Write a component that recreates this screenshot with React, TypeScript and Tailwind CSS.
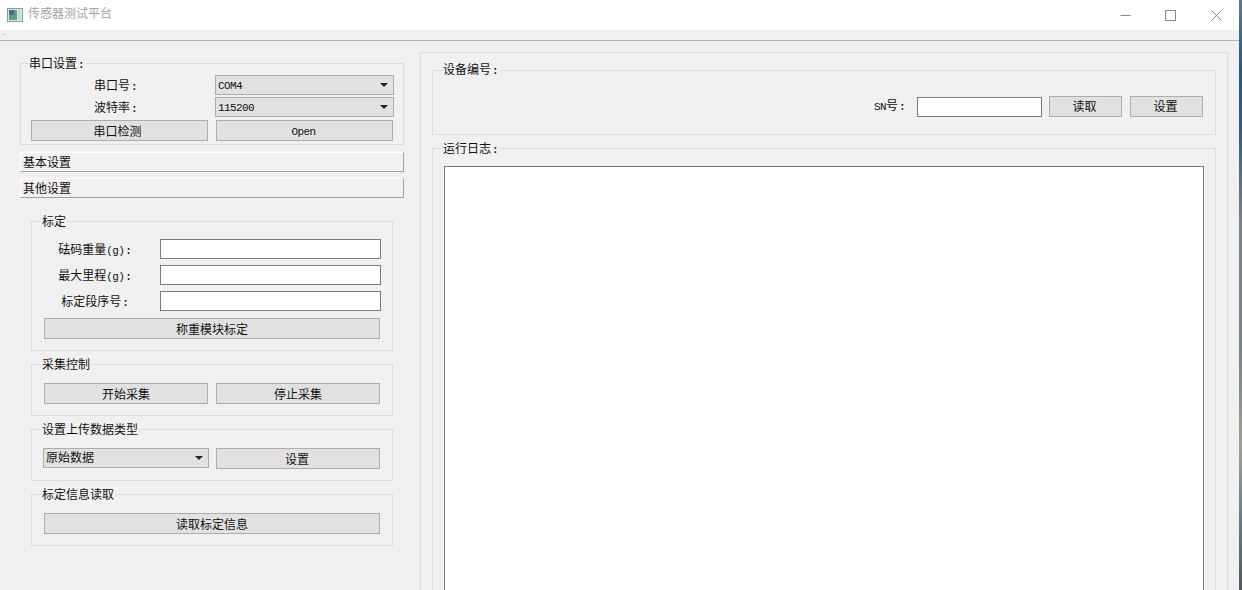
import React from "react";

const FONT = { fontFamily: '"Liberation Mono", "Noto Sans CJK SC", monospace' };

function L({ children }: { children: React.ReactNode }) {
  return <span className="text-[11px] tracking-[-0.6px]">{children}</span>;
}

function Colon() {
  return <span className="ml-[1px] text-[11px] font-bold">:</span>;
}

function Btn({ children, className = "", pad = "pr-[2px]", top = "pt-[4px]" }: { children: React.ReactNode; className?: string; pad?: string; top?: string }) {
  return (
    <div className={`flex items-center justify-center border border-[#adadad] bg-[#e1e1e1] text-[12px] leading-none text-[#111] ${top} ${pad} ${className}`}>
      {children}
    </div>
  );
}

function Combo({ children, className = "" }: { children: React.ReactNode; className?: string }) {
  return (
    <div className={`flex items-center justify-between border border-[#adadad] bg-[#e1e1e1] pl-[2px] pr-[4px] text-[12px] leading-none text-[#111] ${className}`}>
      <span className="pt-[2px]">{children}</span>
      <svg width="8" height="4" viewBox="0 0 8 4" className="mr-[1px]">
        <path d="M0 0H8L4 4Z" fill="#222" />
      </svg>
    </div>
  );
}

function Field({ className = "" }: { className?: string }) {
  return <div className={`border border-[#7a7a7a] bg-white ${className}`} />;
}

function Group({ title, className = "", legendClass = "left-[9px] top-[-7px]", children }: { title: React.ReactNode; className?: string; legendClass?: string; children?: React.ReactNode }) {
  return (
    <div className={`relative border border-[#dcdcdc] ${className}`}>
      <span className={`absolute bg-[#f0f0f0] px-[1px] text-[12px] leading-[16px] whitespace-nowrap text-[#111] ${legendClass}`}>
        {title}
      </span>
      {children}
    </div>
  );
}

function Bar({ title, className = "" }: { title: string; className?: string }) {
  return (
    <div className={`flex h-[20px] w-[384px] items-center border-t border-l border-t-white border-l-white border-r border-b border-r-[#a0a0a0] border-b-[#a0a0a0] pl-[2px] pt-[3px] text-[12px] leading-none text-[#111] ${className}`}>
      {title}
    </div>
  );
}

function FormRow({ label, className = "" }: { label: React.ReactNode; className?: string }) {
  return (
    <div className={`flex h-[20px] items-center ${className}`}>
      <span className="ml-[26px] w-[74px] pt-[3px] text-center text-[12px] leading-none whitespace-nowrap text-[#111]">{label}</span>
      <Field className="ml-[28px] h-[20px] w-[221px]" />
    </div>
  );
}

export default function App() {
  return (
    <div className="flex h-[590px] w-[1242px] overflow-hidden bg-[#f0f0f0]" style={FONT}>
      <div className="flex w-[1239px] flex-col">
        {/* title bar */}
        <div className="flex h-[30px] items-center bg-white">
          <svg width="16" height="14" viewBox="0 0 16 14" className="ml-[7px]">
            <rect x="0.5" y="0.5" width="15" height="13" fill="#e4e8e8" stroke="#8d989c" />
            <rect x="2" y="2" width="8" height="10" fill="#5f9a94" />
            <rect x="2" y="2" width="5" height="5" fill="#456f84" />
            <rect x="11" y="2" width="3" height="10" fill="#cdd4d6" />
          </svg>
          <span className="ml-[5px] text-[12px] leading-none text-[#a2a2a2]">传感器测试平台</span>
          <div className="ml-auto flex items-center">
            <svg width="11" height="11" viewBox="0 0 11 11" className="mr-[34px]">
              <path d="M0.5 5.5H10.5" stroke="#8a8a8a" />
            </svg>
            <svg width="11" height="11" viewBox="0 0 11 11" className="mr-[35px]">
              <rect x="0.5" y="0.5" width="10" height="10" fill="none" stroke="#8a8a8a" />
            </svg>
            <svg width="11" height="11" viewBox="0 0 11 11" className="mr-[17px]">
              <path d="M0.5 0.5L10.5 10.5M10.5 0.5L0.5 10.5" stroke="#8a8a8a" />
            </svg>
          </div>
        </div>
        {/* menu band */}
        <div className="h-[11px] border-b border-[#b4b4b4] bg-[#f0f0f0] pl-[3px] pt-[4px]">
          <div className="h-[1px] w-[1px] bg-[#888]" />
        </div>

        <div className="flex min-h-0 flex-1">
          {/* left column */}
          <div className="ml-[20px] w-[384px] shrink-0 pt-[22px]">
            <Group title={<>串口设置<Colon /></>} legendClass="left-[7px] top-[-7px]" className="h-[82px]">
              <div className="mt-[11px] flex h-[20px] items-center">
                <span className="ml-[73px] w-[121px] pt-[3px] text-[12px] leading-none text-[#111]">串口号<Colon /></span>
                <Combo className="h-[20px] w-[179px]"><L>COM4</L></Combo>
              </div>
              <div className="mt-[2px] flex h-[20px] items-center">
                <span className="ml-[73px] w-[121px] pt-[3px] text-[12px] leading-none text-[#111]">波特率<Colon /></span>
                <Combo className="h-[20px] w-[179px]"><L>115200</L></Combo>
              </div>
              <div className="mt-[3px] ml-[10px] flex gap-[8px]">
                <Btn pad="pr-[4px]" className="h-[21px] w-[177px]">串口检测</Btn>
                <Btn className="h-[21px] w-[177px]"><L>Open</L></Btn>
              </div>
            </Group>
            <Bar title="基本设置" className="mt-[7px]" />
            <Bar title="其他设置" className="mt-[6px]" />

            <div className="ml-[11px] w-[362px] pt-[23px]">
              <Group title="标定" className="h-[130px]">
                <FormRow label={<>砝码重量<L>(g)</L><Colon /></>} className="mt-[17px]" />
                <FormRow label={<>最大里程<L>(g)</L><Colon /></>} className="mt-[6px]" />
                <FormRow label={<>标定段序号<Colon /></>} className="mt-[6px]" />
                <Btn pad="pr-0" className="mt-[7px] ml-[12px] h-[21px] w-[336px]">称重模块标定</Btn>
              </Group>
              <Group title="采集控制" className="mt-[13px] h-[52px]">
                <div className="mt-[18px] ml-[12px] flex gap-[8px]">
                  <Btn pad="pr-0" className="h-[21px] w-[164px]">开始采集</Btn>
                  <Btn pad="pr-0" className="h-[21px] w-[164px]">停止采集</Btn>
                </div>
              </Group>
              <Group title="设置上传数据类型" className="mt-[13px] h-[52px]">
                <div className="mt-[18px] ml-[11px] flex gap-[7px]">
                  <Combo className="h-[20px] w-[166px]">原始数据</Combo>
                  <Btn className="h-[21px] w-[164px]">设置</Btn>
                </div>
              </Group>
              <Group title="标定信息读取" className="mt-[13px] h-[52px]">
                <Btn pad="pr-0" className="mt-[18px] ml-[12px] h-[21px] w-[336px]">读取标定信息</Btn>
              </Group>
            </div>
          </div>

          {/* right column */}
          <div className="ml-[16px] mt-[11px] h-[600px] w-[808px] shrink-0 border border-[#dcdcdc] px-[11px] pt-[17px]">
            <Group title={<>设备编号<Colon /></>} legendClass="left-[9px] top-[-8px]" className="h-[65px]">
              <div className="mt-[25px] flex items-center">
                <span className="ml-[441px] w-[43px] text-[12px] leading-none text-[#111]"><L>SN</L>号<Colon /></span>
                <Field className="h-[20px] w-[125px]" />
                <Btn top="pt-[2px]" className="ml-[7px] h-[21px] w-[73px]">读取</Btn>
                <Btn top="pt-[2px]" className="ml-[8px] h-[21px] w-[73px]">设置</Btn>
              </div>
            </Group>
            <Group title={<>运行日志<Colon /></>} className="mt-[13px] h-[500px] px-[11px] pt-[17px]">
              <Field className="h-[460px] w-[760px]" />
            </Group>
          </div>
        </div>
      </div>
      {/* desktop edge */}
      <div className="w-[3px] bg-[linear-gradient(to_bottom,#5a7a96_0%,#1f5a8a_12%,#2c5f88_22%,#7a8288_38%,#75858c_60%,#a0a092_76%,#5f7f8c_88%,#4f5a5c_100%)]" />
    </div>
  );
}
